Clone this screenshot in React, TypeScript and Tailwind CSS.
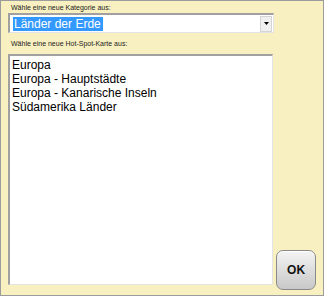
import React from "react"

const items = ["Europa", "Europa - Hauptstädte", "Europa - Kanarische Inseln", "Südamerika Länder"]

export default function App() {
  return (
    <div
      className="w-[324px] h-[296px] bg-[#f8f0c0] border border-[#9c9c9c] flex flex-col pt-[2px] px-[7px]"
      style={{ fontFamily: '"Liberation Sans", Arial, sans-serif' }}
    >
      <div className="h-[9px] text-[7px] leading-[9px] pl-[3px] text-[#222]">Wähle eine neue Kategorie aus:</div>

      {/* Kategorie-Auswahl */}
      <div className="mt-[1px] w-[266px] h-[20px] bg-white border-t-2 border-l-2 border-t-[#a0a0a0] border-l-[#a0a0a0] border-b border-r border-b-[#e4e4e4] border-r-[#e4e4e4] flex items-center pl-[3px] pr-[1px]">
        <span className="bg-[#3399ff] text-white text-[12px] leading-[14px] px-[1px] w-[90px]">Länder der Erde</span>
        <div className="ml-auto w-[12px] h-[16px] bg-[#f0f0f0] border border-[#d4d4d4] flex items-center justify-center">
          <svg width="5" height="3" viewBox="0 0 5 3">
            <path d="M0 0h5L2.5 3z" fill="#000" />
          </svg>
        </div>
      </div>

      <div className="mt-[6px] h-[9px] text-[7px] leading-[9px] pl-[3px] text-[#222]">Wähle eine neue Hot-Spot-Karte aus:</div>

      <div className="mt-[6px] flex items-end">
        {/* Kartenliste */}
        <div className="mb-[5px] w-[266px] h-[231px] bg-white border-t-2 border-l-2 border-t-[#a0a0a0] border-l-[#a0a0a0] border-b border-r border-b-[#e4e4e4] border-r-[#e4e4e4] p-[2px]">
          {items.map((item) => (
            <div key={item} className="text-[12px] leading-[14px] text-black">
              {item}
            </div>
          ))}
        </div>

        <button className="ml-[3px] w-[40px] h-[40px] rounded-[7px] border border-[#8a8a8a] bg-gradient-to-b from-[#f4f4f4] to-[#c8c8c8] shadow-[inset_0_1px_0_#fff] flex items-center justify-center text-[12px] font-bold text-[#111]">
          OK
        </button>
      </div>
    </div>
  )
}
